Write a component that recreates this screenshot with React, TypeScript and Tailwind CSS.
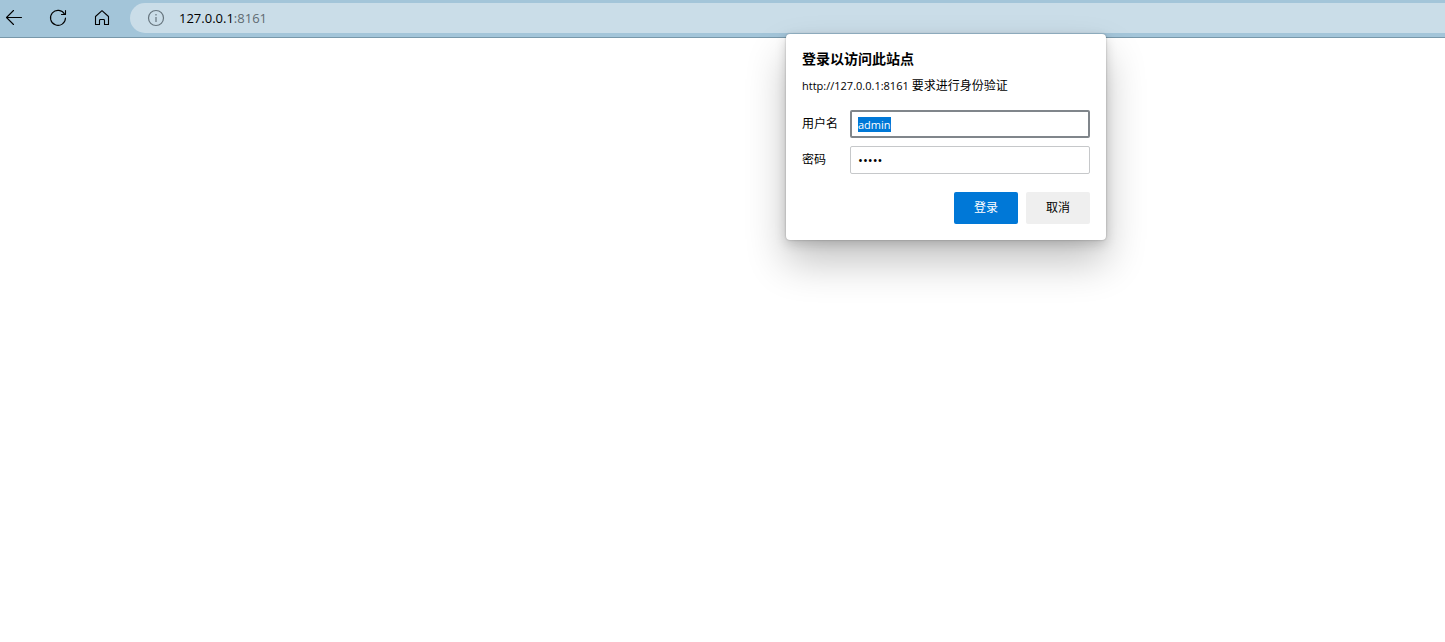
import React, { useEffect, useRef, useState } from 'react';

const App: React.FC = () => (
  <div className="relative min-h-screen bg-white font-['Open_Sans','Noto_Sans_CJK_SC',sans-serif] text-black">
    <Toolbar host="127.0.0.1" port="8161" />
    <LoginDialog origin="http://127.0.0.1:8161" />
  </div>
);

const Toolbar: React.FC<{ host: string; port: string }> = ({ host, port }) => (
  <header className="flex h-[38px] items-center border-b border-[#7898aa] bg-[#a3c5d9] pb-px">
    <nav className="flex items-center gap-6 pl-1">
      <ToolbarButton label="返回">
        <path d="M2.5 9.5H17.5M9.5 2.5L2.5 9.5L9.5 16.5" />
      </ToolbarButton>
      <ToolbarButton label="刷新">
        <path d="M16.6 6.3A7.5 7.5 0 1 0 17.5 10M17.5 2.5V6.5H13.5" />
      </ToolbarButton>
      <ToolbarButton label="主页">
        <path d="M3.5 8.5L10 2.7L16.5 8.5V16.5H12.5V12.4Q12.5 11.5 11.6 11.5H8.4Q7.5 11.5 7.5 12.4V16.5H3.5Z" />
      </ToolbarButton>
    </nav>
    <div className="ml-[18px] flex h-[30px] flex-1 items-center rounded-l-full bg-[#cadde8] pl-4">
      <button type="button" aria-label="查看站点信息" className="text-[#66757e]">
        <svg width="20" height="20" viewBox="0 0 20 20" fill="none" stroke="currentColor" strokeWidth="1.2">
          <circle cx="10" cy="10" r="7.5" />
          <path d="M10 9V14M10 6V7.4" />
        </svg>
      </button>
      <div
        role="textbox"
        aria-label="地址栏"
        contentEditable
        suppressContentEditableWarning
        className="ml-[13px] flex-1 text-[13px] leading-5 outline-none"
      >
        {host}
        <span className="text-[#5f6b72]">:{port}</span>
      </div>
    </div>
  </header>
);

const ToolbarButton: React.FC<{ label: string; children: React.ReactNode }> = ({ label, children }) => (
  <button type="button" aria-label={label}>
    <svg
      width="20"
      height="20"
      viewBox="0 0 20 20"
      fill="none"
      stroke="currentColor"
      strokeWidth="1.1"
      strokeLinecap="round"
      strokeLinejoin="round"
    >
      {children}
    </svg>
  </button>
);

const LoginDialog: React.FC<{ origin: string }> = ({ origin }) => {
  const userRef = useRef<HTMLInputElement>(null);
  const [formData, setFormData] = useState({ username: 'admin', password: 'admin' });

  // The saved user name starts out selected so it can be typed over
  useEffect(() => {
    userRef.current?.focus();
    userRef.current?.select();
  }, []);

  return (
    <form
      role="dialog"
      aria-labelledby="login-title"
      onSubmit={e => e.preventDefault()}
      className="absolute left-[786px] top-[34px] w-80 rounded bg-white p-4 text-xs shadow-[0_0_2px_rgba(0,0,0,0.3),0_4px_12px_rgba(0,0,0,0.16),0_22px_40px_rgba(0,0,0,0.24)]"
    >
      <h1 id="login-title" className="text-sm font-bold leading-[18px]">登录以访问此站点</h1>
      <p className="mt-2.5 leading-4">
        <span className="text-[11px]">{origin}</span> 要求进行身份验证
      </p>

      <div className="mt-4 flex flex-col gap-2">
        <div className="flex items-center">
          <label htmlFor="username" className="w-12 leading-[18px]">用户名</label>
          <input
            id="username"
            ref={userRef}
            type="text"
            className="h-7 min-w-0 flex-1 rounded-xs border-2 border-[#80868b] px-1.5 text-[11px] leading-4 outline-none selection:bg-[#0078d7] selection:text-white"
            value={formData.username}
            onChange={e => setFormData({ ...formData, username: e.target.value })}
          />
        </div>
        <div className="flex items-center">
          <label htmlFor="password" className="w-12 leading-[18px]">密码</label>
          <input
            id="password"
            type="password"
            className="h-7 min-w-0 flex-1 rounded-xs border border-[#c6c8ca] px-[7px] text-[13px] outline-none"
            value={formData.password}
            onChange={e => setFormData({ ...formData, password: e.target.value })}
          />
        </div>
      </div>

      <div className="mt-[18px] flex justify-end gap-2">
        <button type="submit" className="h-8 w-16 rounded-xs bg-[#0078d7] text-white">登录</button>
        <button type="button" className="h-8 w-16 rounded-xs bg-[#efefef]">取消</button>
      </div>
    </form>
  );
};

export default App;
